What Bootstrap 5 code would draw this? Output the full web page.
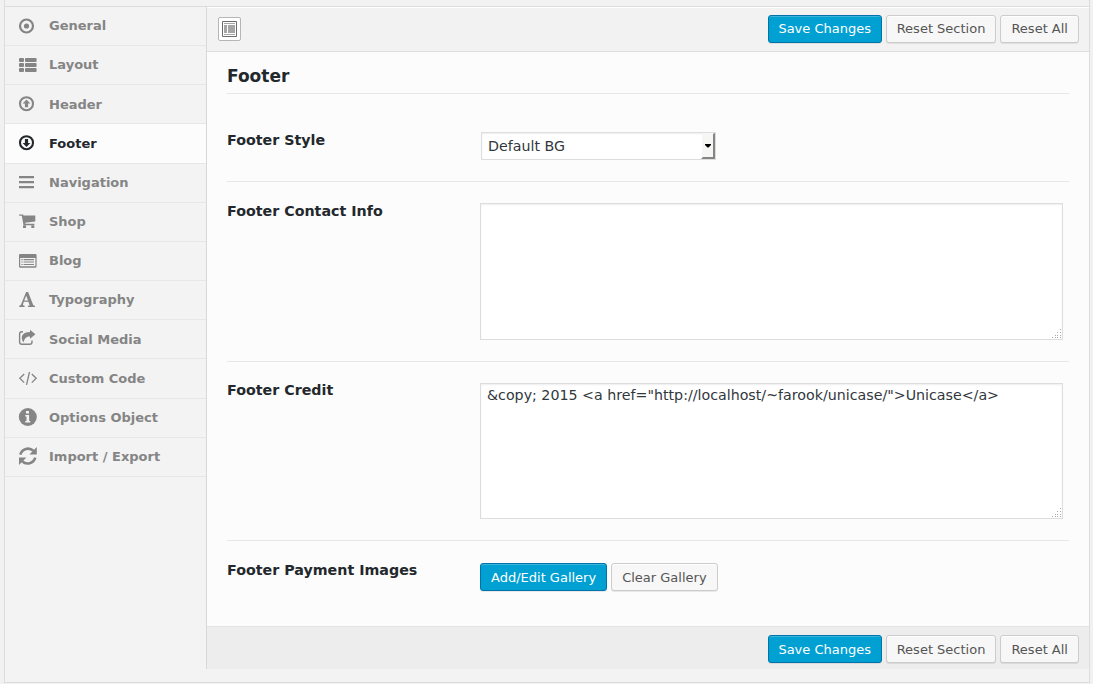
<!DOCTYPE html>
<html lang="en">
<head>
<meta charset="utf-8">
<meta name="viewport" content="width=device-width, initial-scale=1">
<title>Theme Options</title>
<link href="https://cdn.jsdelivr.net/npm/bootstrap@5.3.0/dist/css/bootstrap.min.css" rel="stylesheet">
<style>
body{background:#f1f1f1;font-family:"DejaVu Sans",sans-serif;font-size:13px;line-height:20px;color:#333;height:684px;overflow:hidden}
.panel{width:1086px;height:683px;margin-left:4px;background:#f3f3f3;border:1px solid #dcdcdc;border-top:0}
.panel-top{height:7px;background:#f2f2f2;border-bottom:1px solid #dcdcdc}
.side{width:201px;flex:none}
.side .nav-link{height:39.17px;padding:.46px 0 0 13px;border-bottom:1px solid #e7e7e7;color:#858585;font-weight:700}
.side .nav-link svg{width:20px;height:20px;margin:0 11px 1.2px 0;flex:none;fill:currentColor}
.side .nav-link.active{background:#fcfcfc;color:#23282d;width:201px}
.main{height:662px;border-left:1px solid #d8d8d8;background:#fcfcfc}
.bar{height:45px;background:#f2f2f2;border-top:1px solid #fff;border-bottom:1px solid #dedede;padding:0 10px 1px 11px}
.bar-end{height:43px;background:#ededed;border-top:1px solid #e4e4e4;padding:2px 10px 0 0}
.bar-end .btn-wp,.field .btn-wp{line-height:27px}
.expand{width:23px;height:24px;background:#fff;border:1px solid #b6b6b6;border-radius:2px;padding:0}
.btn-wp{height:28px;padding:0 10px;font-size:13px;line-height:26px;border:1px solid #ccc;border-radius:3px;background:#f7f7f7;color:#555;box-shadow:inset 0 1px 0 #fff,0 1px 0 rgba(0,0,0,.08)}
.btn-save{background:#00a0d2;border-color:#0073aa;color:#fff;box-shadow:inset 0 1px 0 rgba(120,200,230,.5),0 1px 0 rgba(0,0,0,.08)}
.bar .btn-save,.bar-end .btn-save{width:114px;padding:0}
.fields{padding:0 20px;height:574px}
.fields h3{height:42px;font-size:17px;font-weight:700;line-height:48px;margin:0;border-bottom:1px solid #e7e7e7;color:#23282d}
.field{border-bottom:1px solid #e7e7e7}
.field:last-child{border:0}
.field-name{width:253px;font-size:14.25px;font-weight:700;color:#23282d;flex:none}
.area-box{width:583px}
.field textarea,.field select{border:1px solid #ddd;border-radius:0;background:#fff;box-shadow:inset 0 1px 2px rgba(0,0,0,.07);font-size:14.23px;color:#32373c;resize:none;display:block}
.field textarea{width:100%;padding:2px 6px;line-height:19px;overflow:hidden}
.field select{width:235px;height:28px;padding:0 6px;appearance:none;margin-left:1px}
.arrow{right:1px;top:1px}
.grip{right:1px;bottom:1px}
</style>
</head>
<body>
<div class="panel">
<div class="panel-top"></div>
<div class="d-flex align-items-start">
<nav class="side nav flex-column flex-nowrap">
<a class="nav-link d-flex align-items-center" href="#"><svg viewBox="0 0 20 20"><circle cx="8.5" cy="10" r="6.5" fill="none" stroke="currentColor" stroke-width="2.2"/><circle cx="8.5" cy="10" r="2.6"/></svg>General</a>
<a class="nav-link d-flex align-items-center" href="#"><svg viewBox="0 0 20 20"><g><rect x="1" y="3" width="5" height="4" rx="1"/><rect x="7" y="3" width="11.6" height="4" rx="1"/><rect x="1" y="8" width="5" height="4" rx="1"/><rect x="7" y="8" width="11.6" height="4" rx="1"/><rect x="1" y="13" width="5" height="4" rx="1"/><rect x="7" y="13" width="11.6" height="4" rx="1"/></g></svg>Layout</a>
<a class="nav-link d-flex align-items-center" href="#"><svg viewBox="0 0 20 20"><circle cx="8.5" cy="9.7" r="6.5" fill="none" stroke="currentColor" stroke-width="2.1"/><path d="M8.5 5.5 12.4 9.6h-2.3v3.7H6.9V9.6H4.6z"/></svg>Header</a>
<a class="nav-link active d-flex align-items-center" href="#"><svg viewBox="0 0 20 20"><circle cx="8.5" cy="9.7" r="6.5" fill="none" stroke="currentColor" stroke-width="2.1"/><path d="M8.5 14 4.6 9.9h2.3V6.1h3.2v3.8h2.3z"/></svg>Footer</a>
<a class="nav-link d-flex align-items-center" href="#"><svg viewBox="0 0 20 20"><path d="M1 4h15v2.2H1zM1 9h15v2.2H1zM1 14h15v2.2H1z"/></svg>Navigation</a>
<a class="nav-link d-flex align-items-center" href="#"><svg viewBox="0 0 20 20"><path d="M1.2 3.4h3.9l.5 1.2h11.7v6L7.2 11.7l.2 1.1h9v1.4H5.5L3.8 4.8H1.2zM5 14.5h3v2.6H5zM13.3 14.5h3v2.6h-3z"/></svg>Shop</a>
<a class="nav-link d-flex align-items-center" href="#"><svg viewBox="0 0 20 20"><path fill-rule="evenodd" d="M2 3h15.5q1.1 0 1.1 1.2v11.1q0 1.4-1.1 1.4H2q-1 0-1-1.4V4.2Q1 3 2 3zm.2 4v8.2h15.2V7z"/><path d="M3.4 8h1.3v1.2H3.4zm2.2 0H16v1.2H5.6zM3.4 10.4h1.3v1.2H3.4zm2.2 0H16v1.2H5.6zM3.4 12.9h1.3v1.2H3.4zm2.2 0H16v1.2H5.6z"/></svg>Blog</a>
<a class="nav-link d-flex align-items-center" href="#"><svg viewBox="0 0 20 20"><path fill-rule="evenodd" d="M8.1 2h2l4.9 12.4c.3.9.8 1.2 2 1.3v1.2H9.9v-1.2c1.5-.1 1.9-.4 1.5-1.3l-1-2.7H5.9l-.8 2.2c-.4 1.1.1 1.6 1.5 1.8v1.2H1.2v-1.2c1-.2 1.6-.8 2-1.8zm.1 3.8-2 4.7h3.9z"/></svg>Typography</a>
<a class="nav-link d-flex align-items-center" href="#"><svg viewBox="0 0 20 20"><path d="M5 2.8H3.8Q1.6 2.8 1.6 5v8q0 2.2 2.2 2.2h8q2.2 0 2.2-2.2v-1.5" fill="none" stroke="currentColor" stroke-width="1.4"/><path d="M12 .8l5.4 4.4L12 9.7V7.5C8.6 7.4 7 8.8 5.4 13.4 1.7 7.3 4.7 3 12 3z"/></svg>Social Media</a>
<a class="nav-link d-flex align-items-center" href="#"><svg viewBox="0 0 20 20"><path d="M6.2 6 1.8 10.3 6.2 14.6M13.8 6l4.4 4.3-4.4 4.3M11.5 4 8.5 16.8" fill="none" stroke="currentColor" stroke-width="1.3"/></svg>Custom Code</a>
<a class="nav-link d-flex align-items-center" href="#"><svg viewBox="0 0 20 20"><circle cx="9.8" cy="10" r="9"/><path fill="#f3f3f3" d="M8 4h3v2.6H8zM7.3 8h3.8v6h1.2v1.4h-5V14h1.2V9.4H7.3z"/></svg>Options Object</a>
<a class="nav-link d-flex align-items-center" href="#"><svg viewBox="0 0 20 20"><path d="M2.3 8.6C4 2.8 11 .7 15.4 4.8M17.3 11.6C15.5 17.4 8.6 19.4 4.2 15.2" fill="none" stroke="currentColor" stroke-width="2.6"/><path d="M18.8 1.1v7.4h-7.4zM1 18.9v-7.4h7.4z"/></svg>Import / Export</a>
</nav>
<main class="main flex-grow-1">
<div class="bar d-flex align-items-center justify-content-between">
<button type="button" class="expand d-flex align-items-center justify-content-center" aria-label="Expand options"><svg width="15" height="16" viewBox="0 0 15 16"><path d="M.5.5h14v15H.5z" fill="#fff" stroke="#6c6c6c"/><path d="M2 2h11v1H2zM2 4h3v8H2zM6 4h7v8H6zM2 13h11v1H2z" fill="#a5a5a5"/></svg></button>
<div class="d-flex gap-1"><button class="btn btn-wp btn-save">Save Changes</button><button class="btn btn-wp">Reset Section</button><button class="btn btn-wp">Reset All</button></div>
</div>
<form class="fields">
<h3>Footer</h3>
<div class="field d-flex" style="height:88px"><label class="field-name" style="padding-top:36px" for="style">Footer Style</label><div style="padding-top:38px"><div class="position-relative"><select id="style"><option>Default BG</option></select><svg class="arrow position-absolute pe-none" width="14" height="26" viewBox="0 0 14 26"><path fill="#f6f6f4" d="M1 0h11v25H1z"/><path fill="#858585" d="M12 1l2-1v26H0l2-2h10z"/><path d="M4 11h6v1L7.5 14.5h-1L4 12z"/></svg></div></div></div>
<div class="field d-flex" style="height:180px"><label class="field-name" style="padding-top:19px" for="contact">Footer Contact Info</label><div class="area-box" style="padding-top:21px"><div class="position-relative"><textarea id="contact" style="height:137px"></textarea><svg class="grip position-absolute" width="10" height="10" fill="#aaa"><path d="M8 0h1v1H8zM5 3h1v1H5zM8 3h1v1H8zM3 6h1v1H3zM5 6h1v1H5zM8 6h1v1H8zM0 8h1v1H0zM3 8h1v1H3zM5 8h1v1H5zM8 8h1v1H8z"/></svg></div></div></div>
<div class="field d-flex" style="height:179px"><label class="field-name" style="padding-top:18px" for="credit">Footer Credit</label><div class="area-box" style="padding-top:21px"><div class="position-relative"><textarea id="credit" spellcheck="false" style="height:136px">&amp;copy; 2015 &lt;a href="http://localhost/~farook/unicase/"&gt;Unicase&lt;/a&gt;</textarea><svg class="grip position-absolute" width="10" height="10" fill="#aaa"><path d="M8 0h1v1H8zM5 3h1v1H5zM8 3h1v1H8zM3 6h1v1H3zM5 6h1v1H5zM8 6h1v1H8zM0 8h1v1H0zM3 8h1v1H3zM5 8h1v1H5zM8 8h1v1H8z"/></svg></div></div></div>
<div class="field d-flex" style="height:85px"><div class="field-name" style="padding-top:19px">Footer Payment Images</div><div class="d-flex align-items-start gap-1" style="padding-top:22px"><button type="button" class="btn btn-wp btn-save">Add/Edit Gallery</button><button type="button" class="btn btn-wp">Clear Gallery</button></div></div>
</form>
<div class="bar-end d-flex align-items-center justify-content-end gap-1"><button class="btn btn-wp btn-save">Save Changes</button><button class="btn btn-wp">Reset Section</button><button class="btn btn-wp">Reset All</button></div>
</main>
</div>
</div>
<script src="https://cdn.jsdelivr.net/npm/bootstrap@5.3.0/dist/js/bootstrap.bundle.min.js"></script>
</body>
</html>
